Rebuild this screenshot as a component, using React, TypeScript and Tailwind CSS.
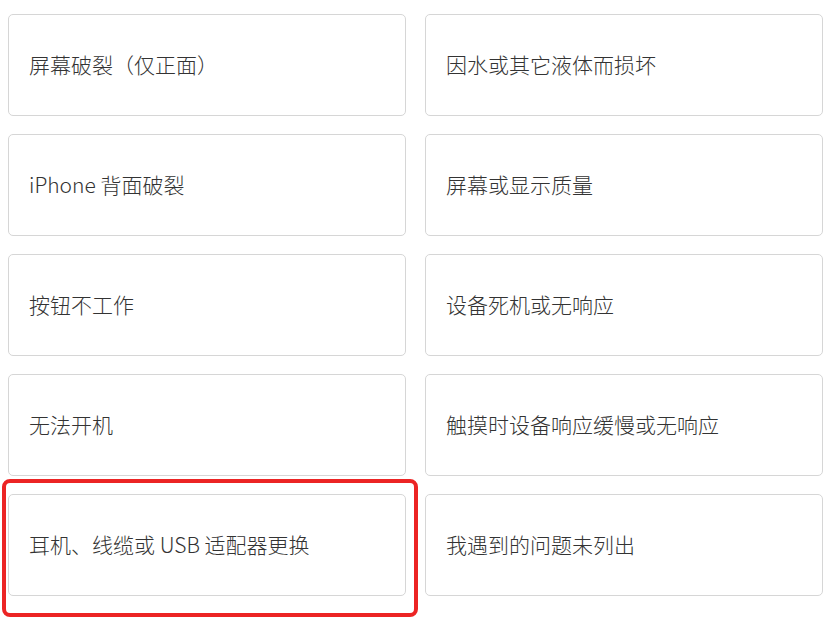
import React from 'react';

const issues: string[] = [
    '屏幕破裂（仅正面）',
    '因水或其它液体而损坏',
    'iPhone 背面破裂',
    '屏幕或显示质量',
    '按钮不工作',
    '设备死机或无响应',
    '无法开机',
    '触摸时设备响应缓慢或无响应',
    '耳机、线缆或 USB 适配器更换',
    '我遇到的问题未列出',
];

const App: React.FC = () => {
    return (
        <div
            className="min-h-screen bg-white pl-2 pt-[14px]"
            style={{ fontFamily: '"Noto Sans CJK SC", "Noto Sans", sans-serif' }}
        >
            <div className="grid grid-cols-[398px_398px] gap-x-[19px] gap-y-[18px]">
                {issues.map((label, i) => (
                    <div key={label} className="relative">
                        <button
                            type="button"
                            className="flex h-[102px] w-full items-center rounded-[5px] border border-[#d6d6d6] bg-white pl-5 text-left text-[21px] font-light text-[#333333]"
                        >
                            {label}
                        </button>
                        {i === 8 && (
                            <div className="pointer-events-none absolute -left-[6px] -right-[12px] -top-[15px] -bottom-[21px] rounded-[8px] border-4 border-[#ec2424]" />
                        )}
                    </div>
                ))}
            </div>
        </div>
    );
};

export default App;
